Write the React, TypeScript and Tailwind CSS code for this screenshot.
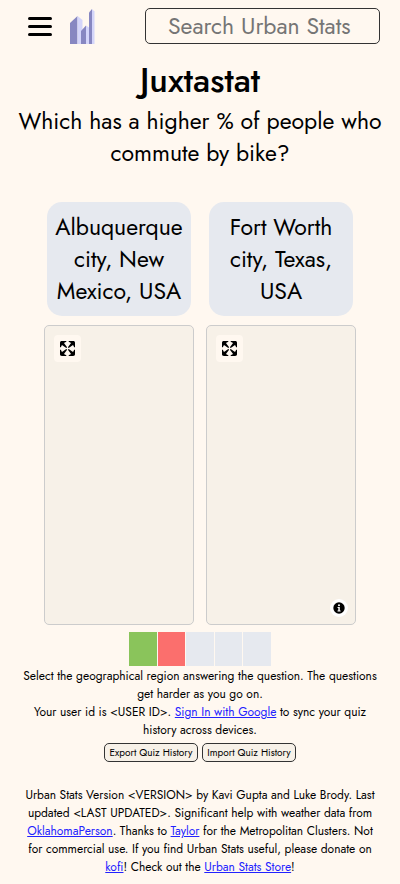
import type { ReactNode } from 'react'

const choices = ['Albuquerque city, New Mexico, USA', 'Fort Worth city, Texas, USA']
const results = ['correct', 'wrong', 'pending', 'pending', 'pending'] as const
const resultColors = {
  correct: 'bg-[#8ac45b]',
  wrong: 'bg-[#fb6f6d]',
  pending: 'bg-[#e6e9ef]',
}

function Logo() {
  return (
    <svg viewBox="0 0 25 36" className="h-9 w-[25px]" aria-hidden="true">
      <path d="M0 15 7.5 8V36H0Z" fill="#8787c1" />
      <path d="M7.5 8 12.5 12V22.5L11 24V36H7.5Z" fill="#d4d5fa" />
      <path d="M11 23 16 17.5V36H11Z" fill="#8787c1" />
      <path d="M16 17.5 19 19.5V36H16Z" fill="#d4d5fa" />
      <path d="M19 4.5 22 1V36H19Z" fill="#8787c1" />
      <path d="M22 1 24.5 3.5V36H22Z" fill="#d4d5fa" />
    </svg>
  )
}

function ExpandIcon() {
  return (
    <svg viewBox="5 5 19 19" className="size-[15px]" fill="#000" aria-hidden="true">
      <path d="M24 16v5.5c0 1.75-.75 2.5-2.5 2.5H16v-1l3-1.5-4-5.5 1-1 5.5 4 1.5-3zM6 16l1.5 3 5.5-4 1 1-4 5.5 3 1.5v1H7.5C5.75 24 5 23.25 5 21.5V16zm7-11v1l-3 1.5 4 5.5-1 1-5.5-4L6 13H5V7.5C5 5.75 5.75 5 7.5 5zm11 2.5c0-1.75-.75-2.5-2.5-2.5H16v1l3 1.5-4 5.5 1 1 5.5-4 1.5 3h1z" />
    </svg>
  )
}

function InfoIcon() {
  return (
    <svg viewBox="0 0 12 12" className="size-3" aria-hidden="true">
      <circle cx="6" cy="6" r="5.7" fill="#000" />
      <circle cx="6" cy="3.2" r="1" fill="#fff" />
      <path d="M4.5 5H6.8V8.5H7.6V9.4H4.5V8.5H5.3V5.9H4.5Z" fill="#fff" />
    </svg>
  )
}

function Link({ children }: { children: ReactNode }) {
  return (
    <a href="#" className="text-[#2222ff] underline">
      {children}
    </a>
  )
}

function MapPanel({ withInfo }: { withInfo: boolean }) {
  return (
    <div className="relative h-[300px] w-full rounded-[5px] border border-[#cccccc] bg-[#f7f1e8]">
      <button
        type="button"
        aria-label="Enter fullscreen"
        className="absolute top-[9px] left-[9px] flex size-[27px] items-center justify-center rounded-[4px] bg-[#fff8f0]"
      >
        <ExpandIcon />
      </button>
      {withInfo && (
        <button
          type="button"
          aria-label="Map attribution"
          className="absolute right-[7px] bottom-[7px] flex size-[18px] items-center justify-center rounded-full bg-white"
        >
          <InfoIcon />
        </button>
      )}
    </div>
  )
}

function HistoryButton({ children }: { children: ReactNode }) {
  return (
    <button
      type="button"
      className="h-[19px] w-[94px] rounded-[5px] border border-[#333333] bg-[#f7f1e8] text-[10px] leading-4 whitespace-nowrap"
    >
      {children}
    </button>
  )
}

export default function App() {
  return (
    <div className="min-h-screen bg-[#fff8f0] px-5 pt-2 pb-2 font-['Jost','Lato',sans-serif] text-black">
      <header className="flex h-9 items-center">
        <button type="button" aria-label="Open menu" className="ml-2 flex w-6 flex-col gap-[5px]">
          <span className="h-[3px] rounded-full bg-black" />
          <span className="h-[3px] rounded-full bg-black" />
          <span className="h-[3px] rounded-full bg-black" />
        </button>
        <a href="#" aria-label="Urban Stats home" className="ml-[18px]">
          <Logo />
        </a>
        <input
          type="text"
          aria-label="Search Urban Stats"
          placeholder="Search Urban Stats"
          className="ml-[50px] h-9 min-w-0 flex-1 rounded-[5px] border border-[#333333] bg-transparent px-[22px] text-[23px] placeholder:text-[#757575]"
        />
      </header>
      <main className="text-center">
        <h1 className="mt-3 text-[34px] leading-[49px] font-medium">Juxtastat</h1>
        <p className="-mx-2 text-[23px] leading-8">Which has a higher % of people who commute by bike?</p>
        <div className="mt-[33px] flex justify-center gap-3">
          {choices.map((name, i) => (
            <div key={name} className="flex w-[150px] flex-col items-center gap-[9px]">
              <button
                type="button"
                className="w-36 rounded-[15px] bg-[#e6e9ef] px-2 pt-[9px] pb-[9px] text-[23px] leading-8"
              >
                {name}
              </button>
              <MapPanel withInfo={i === 1} />
            </div>
          ))}
        </div>
        <div className="mx-auto mt-[7px] grid h-[34px] w-[142px] grid-cols-5 gap-px">
          {results.map((result, i) => (
            <span key={i} className={resultColors[result]} />
          ))}
        </div>
        <div className="mt-px text-[12px] leading-[18px]">
          <p>Select the geographical region answering the question. The questions get harder as you go on.</p>
          <p>
            Your user id is &lt;USER ID&gt;. <Link>Sign In with Google</Link> to sync your quiz history across devices.
          </p>
        </div>
        <div className="mt-1 flex justify-center gap-1">
          <HistoryButton>Export Quiz History</HistoryButton>
          <HistoryButton>Import Quiz History</HistoryButton>
        </div>
      </main>
      <footer className="mt-6 text-center text-[12px] leading-[18px]">
        Urban Stats Version &lt;VERSION&gt; by Kavi Gupta and Luke Brody. Last updated &lt;LAST UPDATED&gt;. Significant
        help with weather data from <Link>OklahomaPerson</Link>. Thanks to <Link>Taylor</Link> for the Metropolitan
        Clusters. Not for commercial use. If you find Urban Stats useful, please donate on <Link>kofi</Link>! Check out
        the <Link>Urban Stats Store</Link>!
      </footer>
    </div>
  )
}
